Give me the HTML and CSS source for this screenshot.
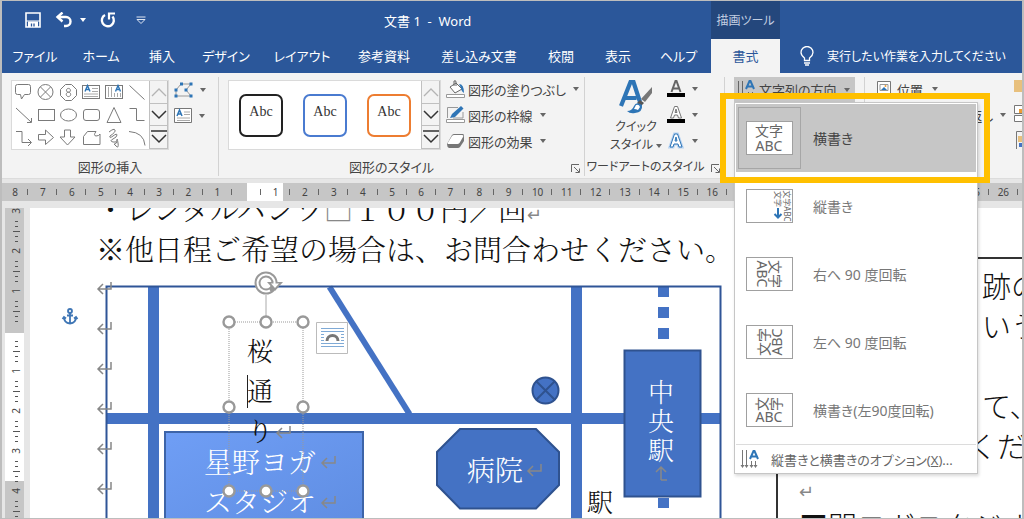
FILE: index.html
```html
<!DOCTYPE html>
<html lang="ja">
<head>
<meta charset="utf-8">
<title>文書 1 - Word</title>
<link rel="stylesheet" href="styles.css">
</head>
<body>
<div class="window">
  <header class="header">
    <div class="titlebar">
      <div class="quick">
        <button class="icon-btn" aria-label="上書き保存"><svg width="16" height="16" viewBox="0 0 16 16"><path d="M1 1h14v14H1z" fill="none" stroke="#fff" stroke-width="1.6"/><path d="M3 9.500h10V15H3z" fill="#fff"/><path d="M1 9h14" stroke="#fff"/><path d="M6.500 11.500v3M9 11.500v3" stroke="#2b579a" stroke-width="1.300"/></svg></button>
        <button class="icon-btn undo" aria-label="元に戻す"><svg width="18" height="16" viewBox="0 0 18 16"><path d="M2.500 5H11a4.500 4.500 0 0 1 0 9H9" fill="none" stroke="#fff" stroke-width="2.400"/><path d="M7.500.500L2.500 5l5 4.500" fill="none" stroke="#fff" stroke-width="2.400"/></svg><i class="caret light"></i></button>
        <button class="icon-btn" aria-label="繰り返し"><svg width="16" height="16" viewBox="0 0 16 16"><path d="M5 3A6 6 0 1 0 12.500 4.500" fill="none" stroke="#fff" stroke-width="2.400"/><path d="M9 7.500V1.500h6" fill="none" stroke="#fff" stroke-width="2.200"/></svg></button>
        <button class="icon-btn more" aria-label="カスタマイズ"><svg width="10" height="8" viewBox="0 0 10 8"><path d="M.500 1h9M1 3.500h8L5 7.500z" fill="none" stroke="#dfe6f2"/></svg></button>
      </div>
      <div class="doc-title">文書 1 &nbsp;-&nbsp; Word</div>
      <div class="context-title">描画ツール</div>
    </div>
    <nav class="tabs">
      <button class="tab">ファイル</button>
      <button class="tab">ホーム</button>
      <button class="tab">挿入</button>
      <button class="tab">デザイン</button>
      <button class="tab">レイアウト</button>
      <button class="tab">参考資料</button>
      <button class="tab">差し込み文書</button>
      <button class="tab">校閲</button>
      <button class="tab">表示</button>
      <button class="tab">ヘルプ</button>
      <button class="tab active">書式</button>
      <label class="tell-me"><svg width="14" height="20" viewBox="0 0 14 20"><path d="M4.500 14.500V12C2 10 1 8.500 1 6.500a6 6 0 0 1 12 0c0 2-1 3.500-3.500 5.500v2.500z" fill="none" stroke="#fff" stroke-width="1.300"/><path d="M4 17h6M5 19h4" stroke="#fff" stroke-width="1.300"/></svg><input type="text" placeholder="実行したい作業を入力してください" aria-label="操作アシスト"></label>
    </nav>
  </header>

  <section class="ribbon">
    <div class="group insert">
      <div class="group-body">
        <div class="gallery">
          <svg class="shapes" width="138" height="70" viewBox="11 80 138 70" fill="none" stroke="#7a7a7a">
            <path d="M17.500 84.500h11q2 0 2 2v6q0 2-2 2h-4l-3 4.500-1-4.500h-3q-2 0-2-2v-6q0-2 2-2z"/>
            <circle cx="45.500" cy="92" r="7.500"/><path d="M40.500 87l10 10M50.500 87l-10 10"/>
            <path d="M65.500 84.500h6l5 5v6l-5 5h-6l-5-5v-6z"/><path d="M68.500 92.200a2 1.900 0 1 0-.1 0a2.200 2.200 0 1 0 .1 0" />
            <rect x="82.500" y="85.500" width="17" height="13"/><path d="M85 91.500l2.500-6 2.500 6M86 89.500h3" stroke="#2e75b6" stroke-width="1.400"/><path d="M92 88.500h6M92 91.500h6M84 94h14M84 96.500h14" stroke="#aaa"/>
            <rect x="105.500" y="85.500" width="17" height="13"/><path d="M115.500 91.500l2.500-6 2.500 6M116.500 89.500h3" stroke="#2e75b6" stroke-width="1.400"/><path d="M108.500 87v10M111.500 87v10M114.500 93v4M117.500 93v4M120.500 93v4" stroke="#aaa"/>
            <path d="M129.500 85.500l15 14"/>
            <path d="M16 108l15 14M31.500 118v4.500H27"/>
            <rect x="38.500" y="109.500" width="16" height="11"/><ellipse cx="68.500" cy="115" rx="8" ry="6"/><rect x="83.500" y="109.500" width="16" height="11" rx="2.500"/>
            <path d="M114 107.500l7 15h-14zM129.500 108.500h7v12h8"/>
            <path d="M16 131.500h6v11h9M28 139l3.500 3.500-3.500 3.500M38.500 134.500h7v-4.500l8 7.500-8 7v-4.500h-7zM64.500 130h6v7h4.500l-7.500 8-7.500-8h4.500z"/>
            <path d="M87.500 131.500h8.500q-3 4 0 4.500 3 0 4-2v10.500H83.500v-8z"/>
            <path d="M109 132q5-4 6-2t-5 6q-1 3 3 0t4-1-4 4 0 3 4-2 1 3-2 3-2-2 3-2"/>
            <path d="M129 131.500q15 1 16 14"/>
          </svg>
          <div class="scroll">
            <button aria-label="前の行" disabled><svg width="16" height="10" viewBox="0 0 16 10"><path d="M1 9l7-7 7 7" fill="none" stroke="#b4b4b4" stroke-width="1.300"/></svg></button>
            <button aria-label="次の行"><svg width="16" height="10" viewBox="0 0 16 10"><path d="M1 1l7 7 7-7" fill="none" stroke="#333" stroke-width="1.500"/></svg></button>
            <button aria-label="その他"><svg width="16" height="14" viewBox="0 0 16 14"><path d="M0 1h16M1 5l7 7 7-7" fill="none" stroke="#333" stroke-width="1.500"/></svg></button>
          </div>
        </div>
        <div class="edit-tools">
          <button class="icon-btn" aria-label="図形の編集"><svg width="19" height="16" viewBox="0 0 19 16"><path d="M7 2h10l-5 6 5 6H2V8z" fill="none" stroke="#999"/><path d="M6 .500h3v3H6zM15.500.500h3v3h-3zM.500 12.500h3v3h-3zM15.500 12.500h3v3h-3zM10.500 6.500h3v3h-3zM.500 6.500h3v3h-3z" fill="#2e75b6"/></svg><i class="caret"></i></button>
          <button class="icon-btn" aria-label="テキスト ボックス"><svg width="18" height="15" viewBox="0 0 18 15"><path d="M.500.500h17v14H.500z" fill="#fff" stroke="#777"/><path d="M3 8l2.500-6L8 8M4 6h3" fill="none" stroke="#2e75b6" stroke-width="1.500"/><path d="M10 4h6M10 6.500h6M3 10h13M3 12.500h13" stroke="#aaa"/></svg><i class="caret"></i></button>
        </div>
      </div>
      <div class="group-label">図形の挿入</div>
    </div>

    <div class="group styles">
      <div class="group-body">
        <div class="gallery">
          <div class="tiles">
            <button class="tile black">Abc</button>
            <button class="tile blue">Abc</button>
            <button class="tile orange">Abc</button>
          </div>
          <div class="scroll">
            <button aria-label="前の行" disabled><svg width="16" height="10" viewBox="0 0 16 10"><path d="M1 9l7-7 7 7" fill="none" stroke="#b4b4b4" stroke-width="1.300"/></svg></button>
            <button aria-label="次の行"><svg width="16" height="10" viewBox="0 0 16 10"><path d="M1 1l7 7 7-7" fill="none" stroke="#333" stroke-width="1.500"/></svg></button>
            <button aria-label="その他"><svg width="16" height="14" viewBox="0 0 16 14"><path d="M0 1h16M1 5l7 7 7-7" fill="none" stroke="#333" stroke-width="1.500"/></svg></button>
          </div>
        </div>
        <div class="commands">
          <button class="command"><svg width="19" height="18" viewBox="0 0 19 18"><path d="M4 7l6-4 6 6-7 4z" fill="#fff" stroke="#666"/><path d="M8 6V1q2-1 2 1v4" fill="none" stroke="#666"/><path d="M13 4q5 0 5 9-3-2-3-5z" fill="#2e75b6"/><path d="M.500 14.500h18v3H.500z" fill="#fff" stroke="#999"/></svg>図形の塗りつぶし<i class="caret"></i></button>
          <button class="command"><svg width="19" height="18" viewBox="0 0 19 18"><path d="M12 1.500H1.500V12M17 6v6H7" fill="none" stroke="#999"/><path d="M4 12l2-4 9-8 2.500 2.500L9 11z" fill="#2e75b6"/><path d="M.500 13.500h18v3H.500z" fill="#fff" stroke="#999"/></svg>図形の枠線<i class="caret"></i></button>
          <button class="command"><svg width="19" height="18" viewBox="0 0 19 18"><path d="M1 12L6 3q1-1 2-1h9q1 0 1 2v5l-4 6q-1 1-2 1H3q-2-1-2-4z" fill="#777"/><path d="M2 10.500l4-6.500q1-1 2-1h8q2 0 1 2l-3.500 6q-1 1-2 1H3q-2 0-1-1.500z" fill="#fff"/></svg>図形の効果<i class="caret"></i></button>
        </div>
      </div>
      <div class="group-label">図形のスタイル</div>
      <button class="launcher" aria-label="図形の書式設定"><svg width="9" height="9" viewBox="0 0 9 9"><path d="M.500 8V.500H8M3 3l5 5M8.500 4.500v4h-4" fill="none" stroke="#666"/></svg></button>
    </div>

    <div class="group wordart">
      <div class="group-body">
        <button class="quick-style">
          <svg width="36" height="34" viewBox="0 0 36 34"><path d="M3 26L12.500 2h3L22 22M6.500 18h12" fill="none" stroke="#2e75b6" stroke-width="4.200"/><path d="M34 7v6l-7 9-4-3z" fill="#777"/><path d="M22 20l4 3-3 3-4-3z" fill="#555"/><path d="M9 31q5 0 7-5t8-1q1 7-7 8-5 1-8-2z" fill="#2e75b6"/><path d="M18 25q3-1 4 2l-2 3q-2-1-4-1z" fill="#fff"/></svg>
          <span>クイック</span><span>スタイル <i class="caret"></i></span>
        </button>
        <div class="text-tools">
          <button class="icon-btn" aria-label="文字の塗りつぶし"><svg width="18" height="18" viewBox="0 0 18 18"><path d="M4.500 12L8.500 1h1l4 11M6 8.500h6" fill="none" stroke="#666" stroke-width="2"/><path d="M0 13h18v4H0z"/></svg><i class="caret"></i></button>
          <button class="icon-btn" aria-label="文字の輪郭"><svg width="18" height="18" viewBox="0 0 18 18"><path d="M3.500 12L7.500.500h3L14.500 12h-3l-1-3h-3l-1 3zM8 6.500h2L9 3z" fill="#fff" stroke="#777"/><path d="M0 13h18v4H0z"/></svg><i class="caret"></i></button>
          <button class="icon-btn" aria-label="文字の効果"><svg width="18" height="18" viewBox="0 0 18 18"><path d="M3 15L7.500 2h3L15 15h-3l-1-3H7l-1 3zM8 9h2L9 5z" fill="#fff" stroke="#b7d3f2" stroke-width="3"/><path d="M3 15L7.500 2h3L15 15h-3l-1-3H7l-1 3zM8 9h2L9 5z" fill="#fff" stroke="#2e75b6"/></svg><i class="caret"></i></button>
        </div>
      </div>
      <div class="group-label">ワードアートのスタイル</div>
      <button class="launcher" aria-label="文字の効果の設定"><svg width="9" height="9" viewBox="0 0 9 9"><path d="M.500 8V.500H8M3 3l5 5M8.500 4.500v4h-4" fill="none" stroke="#666"/></svg></button>
    </div>

    <div class="group direction">
      <div class="menu-anchor">
        <button class="direction-btn" aria-expanded="true"><svg width="20" height="20" viewBox="0 0 20 20"><path d="M2.500 1v15M6.500 1v15M12.500 12v4M16.500 12v4" stroke="#666"/><path d="M10 9l3.500-8h1L18 9M11.500 6.500h5" fill="none" stroke="#2e75b6" stroke-width="2"/></svg>文字列の方向<i class="caret"></i></button>
        <div class="menu" role="menu">
          <button class="item selected" role="menuitem"><span class="thumb"><svg width="47" height="34" viewBox="0 0 47 34"><rect class="card" x=".500" y=".500" width="46" height="33"/><g class="sample"><text x="23" y="15">文字</text><text x="23" y="30">ABC</text></g></svg></span>横書き</button>
          <button class="item" role="menuitem"><span class="thumb"><svg width="47" height="34" viewBox="0 0 47 34"><rect class="card" x=".500" y=".500" width="46" height="33"/><g class="sample small"><text transform="translate(38 17) rotate(90)">文字ABC</text><text transform="translate(29 10) rotate(90)">文字</text></g><path d="M32 19v9M28.500 25l3.500 3.500 3.500-3.500" fill="none" stroke="#2e75b6" stroke-width="2"/></svg></span>縦書き</button>
          <button class="item" role="menuitem"><span class="thumb"><svg width="47" height="34" viewBox="0 0 47 34"><rect class="card" x=".500" y=".500" width="46" height="33"/><g class="sample" transform="translate(23 17) rotate(90)"><text y="-1">文字</text><text y="12">ABC</text></g></svg></span>右へ 90 度回転</button>
          <button class="item" role="menuitem"><span class="thumb"><svg width="47" height="34" viewBox="0 0 47 34"><rect class="card" x=".500" y=".500" width="46" height="33"/><g class="sample" transform="translate(24 17) rotate(-90)"><text y="-1">文字</text><text y="12">ABC</text></g></svg></span>左へ 90 度回転</button>
          <button class="item" role="menuitem"><span class="thumb"><svg width="47" height="34" viewBox="0 0 47 34"><rect class="card" x=".500" y=".500" width="46" height="33"/><g class="sample"><text transform="translate(21 11) rotate(-90)">文</text><text transform="translate(35 11) rotate(-90)">字</text><text x="23" y="29">ABC</text></g></svg></span>横書き(左90度回転)</button>
          <button class="options" role="menuitem"><svg width="20" height="20" viewBox="0 0 20 20"><path d="M2.500 1v15M6.500 1v15M11.500 12v4M15.500 12v4" stroke="#777"/><path d="M.500 16h4l-2 3zM4.500 16h4l-2 3zM9.500 16h4l-2 3zM13.500 16h4l-2 3z" fill="#777"/><path d="M10 10l3.500-8h1L18 10M11.500 7.500h5" fill="none" stroke="#2e75b6" stroke-width="2"/></svg><span>縦書きと横書きのオプション(<u>X</u>)...</span></button>
          <div class="highlight"></div>
        </div>
      </div>
    </div>

    <div class="group arrange">
      <div class="commands">
        <button class="command place"><svg width="15" height="17" viewBox="0 0 15 17"><path d="M.500.500h13v15H.500z" fill="#fff" stroke="#777"/><path d="M3 3.500h8v6H3z" fill="#fff" stroke="#999"/><path d="M4 9l3-3 3 3z" fill="#2e75b6"/><circle cx="8.500" cy="5" r="1" fill="#ed9b33"/><path d="M3 12.500h8" stroke="#aaa"/></svg>位置<i class="caret"></i></button>
        <button class="command wrap">文字列の折り返し<i class="caret"></i></button>
      </div>
      <div class="edge-icons">
        <svg width="8" height="76" viewBox="0 0 8 76"><path d="M0 0h8v12H0z" fill="#e8c07d"/><path d="M.500 25.500h8v8h-8zM.500 35.500h8v6h-8z" fill="#fff" stroke="#777"/><path d="M5 29h3v4H5z" fill="#ed9b33"/><path d="M2.500 69V51.500H8" fill="none" stroke="#777"/><path d="M4 56h4v6H4z" fill="#e8c07d"/><path d="M5 63h3v4H5z" fill="#4472c4"/></svg>
      </div>
    </div>
  </section>

  <div class="ruler">
    <span>8</span><span>7</span><span>6</span><span>5</span><span>4</span><span>3</span><span>2</span><span>1</span><span class="zero"></span><span class="first">1</span><span>2</span><span>3</span><span>4</span><span>5</span><span>6</span><span>7</span><span>8</span><span>9</span><span>10</span><span>11</span><span>12</span><span>13</span><span>14</span><span>15</span><span>16</span><span></span><span></span><span></span><span></span><span></span><span></span><span></span><span></span><span>25</span><span>26</span>
  </div>

  <main class="workspace">
    <svg class="side-ruler" width="19" height="311" viewBox="5 208 19 311">
      <defs><pattern id="ticks" x="5" y="211" width="19" height="40" patternUnits="userSpaceOnUse"><path d="M10 10.500h3M10 15.500h3M10 25.500h3M10 30.500h3M8 20.500h7" stroke="#555"/></pattern></defs>
      <rect x="5" y="208" width="19" height="311" fill="#c6c6c6"/>
      <rect x="5" y="333" width="19" height="148" fill="#fff"/>
      <rect x="5" y="208" width="19" height="311" fill="url(#ticks)"/>
      <g class="side-numbers"><text transform="translate(20 211) rotate(-90)">3</text><text transform="translate(20 251) rotate(-90)">2</text><text transform="translate(20 291) rotate(-90)">1</text><text transform="translate(20 371) rotate(-90)">1</text><text transform="translate(20 411) rotate(-90)">2</text><text transform="translate(20 451) rotate(-90)">3</text><text transform="translate(20 491) rotate(-90)">4</text></g>
    </svg>
    <article class="page">
      <p>・レンタルパンツ<span class="mark">□</span>１００円／回<span class="mark small-mark">↵</span></p>
      <p>※他日程ご希望の場合は、お問合わせください。</p>
      <svg class="map" width="708" height="250" viewBox="30 269 708 250">
        <defs>
          <linearGradient id="studio" x2="1" y2="1"><stop offset="0" stop-color="#6f9ef5"/><stop offset="1" stop-color="#5f8de2"/></linearGradient>
          <g id="return" fill="none" stroke="#888" stroke-width="1.500"><path d="M6-6V1H-7M-2-4l-5 5 5 5"/></g>
          <circle id="handle" r="5.500" fill="#fff" stroke="#999" stroke-width="2.400"/>
        </defs>
        <g stroke="#4472c4" stroke-width="11" fill="none">
          <path d="M153.500 287v240M576.500 287v240M107 418.500h613"/>
          <path d="M329.500 287l80 127" stroke-width="6"/>
          <path d="M663.500 287v10M663.500 307v11M663.500 328v11M663.500 498v10"/>
        </g>
        <path d="M106.500 530V286.500h614V530" fill="none" stroke="#2f5597" stroke-width="2"/>
        <path d="M165 530V432h198v98" fill="url(#studio)" stroke="#3d64a8" stroke-width="2"/>
        <g fill="#4472c4" stroke="#2f528f" stroke-width="2">
          <path d="M624.500 350.500h76v146h-76zM460 429h76l23 23v33l-23 23.500h-76L437 485v-33z"/>
          <circle cx="545.500" cy="390.500" r="13"/><path d="M536 381l19 19M555 381l-19 19"/>
        </g>
        <use href="#return" x="105" y="288"/><use href="#return" x="105" y="328"/><use href="#return" x="105" y="368"/><use href="#return" x="105" y="408"/><use href="#return" x="105" y="448"/><use href="#return" x="105" y="488"/>
        <use href="#return" x="329" y="462"/><use href="#return" x="329" y="502"/><use href="#return" x="535" y="470"/><use href="#return" x="284" y="432"/>
        <path d="M661 480v-13M656 472l5-5 5 5M661 480h6" fill="none" stroke="#888" stroke-width="1.500"/>
        <g class="white-text"><text x="204" y="473">星野ヨガ</text><text x="204" y="513">スタジオ</text><text x="467" y="481">病院</text></g>
        <g class="white-text single"><text x="648" y="402">中</text><text x="648" y="431">央</text><text x="648" y="460">駅</text></g>
        <g class="black-text single"><text x="247" y="361">桜</text><text x="247" y="401">通</text><text x="247" y="441">り</text><text x="587" y="512">駅</text></g>
        <path d="M247.500 375v33" stroke="#222"/>
        <path d="M229 322h74v169h-74z" fill="none" stroke="#999" stroke-dasharray="1 1"/>
        <path d="M266 295v22" stroke="#aaa"/>
        <use href="#handle" x="229" y="322"/><use href="#handle" x="266" y="322"/><use href="#handle" x="303" y="322"/><use href="#handle" x="229" y="407"/><use href="#handle" x="303" y="407"/><use href="#handle" x="229" y="491"/><use href="#handle" x="266" y="491"/><use href="#handle" x="303" y="491"/>
        <circle cx="266" cy="283" r="8.500" fill="#fff" stroke="#999" stroke-width="6"/><path d="M267 282h16l-8 9z" fill="#999"/><path d="M270 290.500A8.500 8.500 0 1 1 274.500 284" fill="none" stroke="#fff" stroke-width="2"/><path d="M271 283.500h8l-4 4.500z" fill="#fff"/>
        <path d="M316.500 322.500h31v31h-31z" fill="#fff" stroke="#bbb"/>
        <path d="M321 328.500h23M321 331.500h23M321 334.500h3M341 334.500h3M321 337.500h3M341 337.500h3M321 340.500h3M341 340.500h3M321 343.500h23M321 346.500h23" stroke="#7faad6"/><path d="M327 341a5.500 5.500 0 0 1 11 0" fill="none" stroke="#777" stroke-width="3"/>
        <g fill="none" stroke="#3f76b5" stroke-width="1.800"><circle cx="70" cy="311" r="2"/><path d="M70 313v10M67 315.500h6M64 317q0 6 6 6.500 6-.500 6-6.500M62.500 319l1.500-2 2 1.500M77.500 319l-1.500-2-2 1.500"/></g>
      </svg>
    </article>
    <article class="page next">
      <div class="frame">
        <p>跡の</p><p>いう</p><p></p><p>て、</p><p class="pull">くだ</p>
        <p class="empty"><span class="mark small-mark">↵</span></p>
        <p class="last">■開ヨガスタジオ様</p>
      </div>
    </article>
  </main>
</div>
</body>
</html>
```
FILE: styles.css
```css
* { box-sizing: border-box; }
body {
  margin: 0;
  font-family: "Noto Sans", "Noto Sans CJK JP", sans-serif;
  font-size: 13px;
  color: #444;
}
button {
  font: inherit;
  font-feature-settings: "palt";
  color: inherit;
  border: 0;
  padding: 0;
  margin: 0;
  background: none;
}
svg { display: block; flex: none; }
p { margin: 0; }
.window {
  height: 100vh;
  display: flex;
  flex-direction: column;
  overflow: hidden;
  background: #e6e6e6;
  border: 1px solid #bdbdbd;
  border-left-width: 2px;
  border-right-width: 2px;
}
.header { background: #2b579a; color: #fff; flex: none; }
.titlebar {
  display: grid;
  grid-template-columns: 382px 327px 69px 1fr;
  height: 38px;
  align-items: center;
}
.quick { display: flex; align-items: center; gap: 14px; padding-left: 23px; }
.icon-btn { display: flex; align-items: center; gap: 7px; }
.more { margin-left: 6px; }
.caret {
  display: inline-block;
  flex: none;
  border: 3px solid transparent;
  border-top: 4px solid #666;
  border-bottom: 0;
}
.light { border-top-color: #fff; }
.context-title {
  align-self: stretch;
  display: flex;
  align-items: center;
  justify-content: center;
  background: #24477c;
  color: #c3cfe2;
  font-size: 12px;
  font-feature-settings: "palt";
}
.tabs {
  display: grid;
  grid-template-columns: 66px 66px 56px 72px 80px 84px 106px 58px 56px 65px 69px 1fr;
  height: 34px;
}
.tab { white-space: nowrap; padding-bottom: 1px; }
.tab.active { background: #f3f3f3; color: #2b579a; }
.tell-me { display: flex; align-items: center; gap: 13px; padding-left: 20px; }
.tell-me input {
  flex: 1;
  min-width: 0;
  font: inherit;
  font-size: 12px;
  font-feature-settings: "palt";
  color: #fff;
  border: 0;
  padding: 0;
  background: none;
}
.tell-me input::placeholder { color: #fff; opacity: 1; }

.ribbon {
  display: flex;
  flex: none;
  height: 106px;
  padding-top: 4px;
  background: #f3f3f3;
  border-bottom: 1px solid #dcdcdc;
  white-space: nowrap;
}
.group {
  position: relative;
  display: flex;
  flex-direction: column;
  flex: none;
  height: 99px;
  border-right: 1px solid #d2d2d2;
}
.insert { width: 217px; }
.styles { width: 366px; }
.wordart { width: 140px; }
.group-body { display: flex; flex: 1; padding-top: 3px; }
.insert .group-body, .styles .group-body { padding-left: 9px; }
.group-label { text-align: center; line-height: 16px; padding-bottom: 1px; font-feature-settings: "palt"; }
.wordart .group-label { font-size: 12px; padding-right: 18px; }
.styles .group-label { padding-right: 20px; }
.launcher { position: absolute; right: 4px; bottom: 3px; }
.gallery {
  display: flex;
  height: 70px;
  background: #fff;
  border: 1px solid #dadada;
}
.shapes { margin: -1px 0 0 -1px; }
.scroll { display: flex; flex-direction: column; width: 19px; background: #f3f3f3; }
.scroll button {
  flex: 1;
  display: flex;
  align-items: center;
  justify-content: center;
  border: 1px solid #c0c0c0;
  border-top-width: 0;
}
.edit-tools { display: flex; flex-direction: column; gap: 10px; padding: 2px 0 0 5px; }
.tiles { display: flex; align-items: center; gap: 20px; padding: 0 10px; }
.tile {
  width: 44px;
  height: 43px;
  padding-bottom: 6px;
  border: 2px solid #222;
  border-radius: 7px;
  font-family: "Liberation Serif", serif;
  font-size: 14px;
  color: #333;
}
.tile.blue { border-color: #4a7bd0; }
.tile.orange { border-color: #ed7d31; }
.commands { display: flex; flex-direction: column; gap: 8px; }
.styles .commands { padding: 0 0 0 5px; }
.command { display: flex; align-items: center; gap: 3px; height: 18px; }
.command .caret, .direction-btn .caret { margin-left: 4px; }
.quick-style {
  display: flex;
  flex-direction: column;
  align-items: center;
  width: 82px;
  padding: 0 0 0 20px;
  line-height: 18px;
  font-size: 12px;
}
.quick-style svg { margin-bottom: 4px; }
.quick-style .caret { vertical-align: middle; }
.text-tools { display: flex; flex-direction: column; gap: 8px; }

.direction { padding-left: 9px; width: 140px; }
.menu-anchor { position: relative; width: 121px; }
.direction-btn {
  display: flex;
  align-items: center;
  width: 100%;
  height: 25px;
  padding-left: 2px;
  gap: 3px;
  background: #c6c6c6;
}
.menu {
  position: absolute;
  z-index: 2;
  top: 100%;
  left: 0;
  width: 244px;
  padding: 1px 1px 0;
  background: #fff;
  border: 1px solid #c6c6c6;
  box-shadow: 1px 2px 3px rgba(0, 0, 0, .15);
}
.item {
  display: flex;
  align-items: center;
  gap: 12px;
  width: 100%;
  height: 68px;
  padding-left: 2px;
  color: #777;
  font-size: 14px;
}
.item.selected { background: #c6c6c6; color: #444; }
.thumb {
  display: flex;
  align-items: center;
  justify-content: center;
  width: 63px;
  height: 62px;
  border: 1px solid transparent;
}
.selected .thumb { border-color: #a6a6a6; }
.card { fill: #fff; stroke: #a0a0a0; }
.sample { font-size: 14px; text-anchor: middle; fill: #666; }
.small { font-size: 8px; }
.options {
  display: flex;
  align-items: center;
  gap: 11px;
  width: 100%;
  height: 29px;
  padding-left: 4px;
  border-top: 1px solid #dcdcdc;
  color: #666;
}
.highlight {
  position: absolute;
  top: -10px;
  left: -15px;
  width: 270px;
  height: 90px;
  border: 6px solid #ffc000;
  pointer-events: none;
}
.arrange {
  flex: 1;
  flex-direction: row;
  justify-content: space-between;
  min-width: 0;
  padding: 3px 0 0 12px;
  border: 0;
}
.wrap { padding-left: 17px; }
.place { gap: 5px; }
.edge-icons { overflow: hidden; }

.ruler {
  display: flex;
  flex: none;
  height: 18px;
  margin-top: 4px;
  padding-right: 4px;
  background: #c6c6c6;
  font-size: 10px;
  line-height: 18px;
  text-align: center;
}
.ruler span {
  flex: 1 1 0;
  min-width: 0;
  background: linear-gradient(#666, #666) right center / 1px 6px no-repeat;
}
.ruler span:first-child { flex-grow: .9; }
.ruler .zero {
  background: linear-gradient(#666, #666) right center / 1px 6px no-repeat, linear-gradient(90deg, #c6c6c6 50%, #fff 50%);
}
.ruler .first {
  background: linear-gradient(#666, #666) right center / 1px 6px no-repeat, linear-gradient(90deg, #fff 75%, #c6c6c6 75%);
}
.workspace {
  display: flex;
  flex: 1;
  min-height: 0;
  margin-top: 7px;
  padding-left: 3px;
  overflow: hidden;
}
.side-numbers { font-size: 10px; text-anchor: middle; fill: #444; }
.page {
  flex: none;
  width: 708px;
  margin-left: 6px;
  background: #fff;
  color: #111;
  font-family: "Noto Serif CJK JP", "Noto Sans CJK JP", serif;
  font-size: 29px;
  font-weight: 300;
  line-height: 40px;
  white-space: nowrap;
  overflow: hidden;
}
.page p { padding-left: 66px; height: 40px; }
.page p:first-child { margin-top: -19px; }
.mark { color: #888; }
.small-mark { font-size: 18px; }
.white-text, .black-text { font-size: 28px; }
.single { font-size: 26px; }
.white-text { fill: #fff; }
.black-text { fill: #111; }
.next { flex: 1; margin: 0; padding: 49px 0 0 38px; min-width: 0; }
.frame {
  height: 300px;
  padding: 6px 0 0 10px;
  border: solid #333;
  border-width: 2px 0 0 2px;
  font-family: "Noto Sans CJK JP", sans-serif;
}
.next .frame p { margin: 0; padding-left: 194px; }
.next .frame .pull { padding-left: 180px; }
.next .frame .empty, .next .frame .last { padding-left: 11px; }
```
